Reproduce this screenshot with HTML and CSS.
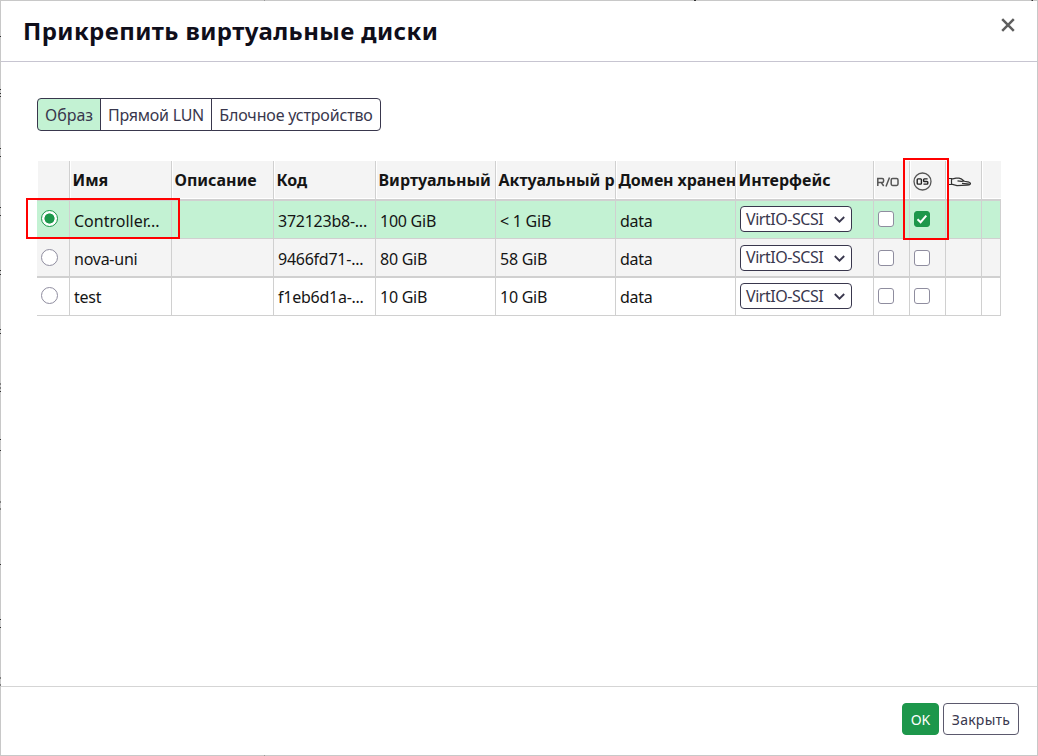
FILE: index.html
```html
<!DOCTYPE html>
<html lang="ru">
<head>
    <meta charset="UTF-8">
    <meta name="viewport" content="width=device-width, initial-scale=1.0">
    <title>Прикрепить виртуальные диски</title>
    <link rel="stylesheet" href="styles.css">
</head>
<body>

    <div class="modal">
        <!-- Header -->
        <div class="modal-header">
            <h1>Прикрепить виртуальные диски</h1>
            <button class="close-btn" aria-label="Закрыть">
                <svg width="14" height="14" viewBox="0 0 14 14"><path d="M1.2 1.2L12.8 12.8M12.8 1.2L1.2 12.8"/></svg>
            </button>
        </div>

        <!-- Body -->
        <div class="modal-body">
            <div class="tabs">
                <button class="tab active">Образ</button>
                <button class="tab">Прямой LUN</button>
                <button class="tab">Блочное устройство</button>
            </div>

            <div class="disks">
                <table class="disk-table">
                    <colgroup>
                        <col class="col-radio">
                        <col class="col-text"><col class="col-text"><col class="col-text">
                        <col class="col-size"><col class="col-size"><col class="col-size">
                        <col class="col-interface">
                        <col class="col-icon"><col class="col-icon"><col class="col-icon">
                        <col class="col-last">
                    </colgroup>
                    <thead>
                        <tr>
                            <th></th>
                            <th>Имя</th>
                            <th>Описание</th>
                            <th>Код</th>
                            <th>Виртуальный</th>
                            <th>Актуальный р</th>
                            <th class="domain">Домен хранен</th>
                            <th>Интерфейс</th>
                            <th class="icon-cell">
                                <svg class="icon-ro" width="22" height="10" viewBox="0 0 22 10"><path d="M.8 9V1.5H5.2Q6.6 1.5 6.6 3V4Q6.6 5.5 5.2 5.5H.8M4.3 5.5L6.7 9M9 9.5L12.5 .5M15.6 1.5H19.6Q21 1.5 21 3V7Q21 8.4 19.6 8.4H15.6Q14.2 8.4 14.2 7V3Q14.2 1.5 15.6 1.5Z"/></svg>
                            </th>
                            <th class="icon-cell">
                                <svg class="icon-os" width="19" height="19" viewBox="0 0 19 19"><circle cx="9.5" cy="9.5" r="8.5"/><path d="M5 6.9H7.6Q8.4 6.9 8.4 7.7V11.3Q8.4 12.1 7.6 12.1H5Q4.2 12.1 4.2 11.3V7.7Q4.2 6.9 5 6.9ZM14.6 6.9H11.4Q10.6 6.9 10.6 7.7V8.7Q10.6 9.5 11.4 9.5H14Q14.8 9.5 14.8 10.3V11.3Q14.8 12.1 14 12.1H10.5"/></svg>
                            </th>
                            <th class="icon-cell">
                                <svg class="icon-hand" width="24" height="10" viewBox="0 0 24 10"><path d="M0 1.5H3.5V7.5H0M3.5 2.2L8 1.2H11Q13 1.4 16 4L13.5 4.4L9.5 3.8M15 4L21 5.2Q23 6 22.3 7.2Q21.5 8.2 19 8.2L9 8.6L3.5 7.2M14 6.4L21.5 7"/></svg>
                            </th>
                            <th></th>
                        </tr>
                    </thead>
                    <tbody>
                        <tr class="selected">
                            <td><input type="radio" name="disk" class="radio" checked></td>
                            <td class="name">Controller...</td>
                            <td></td>
                            <td>372123b8-...</td>
                            <td>100 GiB</td>
                            <td>&lt; 1 GiB</td>
                            <td>data</td>
                            <td class="select-cell"><button class="select">VirtIO-SCSI<svg width="11" height="7" viewBox="0 0 11 7"><path d="M.8 1L5.5 5.7L10.2 1"/></svg></button></td>
                            <td><input type="checkbox" class="checkbox"></td>
                            <td><span class="checkbox checked"><svg width="12" height="10" viewBox="0 0 12 10"><path d="M1.5 5.2L4.6 8.2L10.3 1.6"/></svg></span></td>
                            <td></td>
                            <td></td>
                        </tr>
                        <tr class="even">
                            <td><input type="radio" name="disk" class="radio"></td>
                            <td>nova-uni</td>
                            <td></td>
                            <td>9466fd71-...</td>
                            <td>80 GiB</td>
                            <td>58 GiB</td>
                            <td>data</td>
                            <td class="select-cell"><button class="select">VirtIO-SCSI<svg width="11" height="7" viewBox="0 0 11 7"><path d="M.8 1L5.5 5.7L10.2 1"/></svg></button></td>
                            <td><input type="checkbox" class="checkbox"></td>
                            <td><input type="checkbox" class="checkbox"></td>
                            <td></td>
                            <td></td>
                        </tr>
                        <tr class="last">
                            <td><input type="radio" name="disk" class="radio"></td>
                            <td>test</td>
                            <td></td>
                            <td>f1eb6d1a-...</td>
                            <td>10 GiB</td>
                            <td>10 GiB</td>
                            <td>data</td>
                            <td class="select-cell"><button class="select">VirtIO-SCSI<svg width="11" height="7" viewBox="0 0 11 7"><path d="M.8 1L5.5 5.7L10.2 1"/></svg></button></td>
                            <td><input type="checkbox" class="checkbox"></td>
                            <td><input type="checkbox" class="checkbox"></td>
                            <td></td>
                            <td></td>
                        </tr>
                    </tbody>
                </table>
                <!-- Highlight frames over the table -->
                <div class="frame frame-disk"></div>
                <div class="frame frame-os"></div>
            </div>
        </div>

        <!-- Footer -->
        <div class="modal-footer">
            <button class="btn btn-primary">OK</button>
            <button class="btn">Закрыть</button>
        </div>
    </div>

    <!-- Page behind the modal, seen only along its edges -->
    <svg class="page-edge" width="1038" height="756" viewBox="0 0 1038 756">
        <path d="M0 36.5H1M0 89.5H1M0 93.5H1M0 96.5H1M0 148.5H1M0 156.5H1M0 207.5H1M0 215.5H1M0 270.5H1M0 274.5H1M0 329.5H1M0 333.5H1M0 384H1M0 388H1M0 391.5H1M0 439.5H1M0 450.5H1M0 502H1M0 509H1M0 564.5H1M0 619.5H1M0 627.5H1M0 678H1M0 685H1M694 .5H696M1031.5 .5H1033"/>
        <path class="light" d="M264.5 0V1M264.5 755V756"/>
    </svg>

</body>
</html>
```
FILE: styles.css
```css
* {
    margin: 0;
    padding: 0;
    box-sizing: border-box;
    font-family: "Noto Sans", sans-serif;
}

body {
    background-color: #fff;
    color: #151515;
    font-size: 16px;
}

.modal {
    display: flex;
    flex-direction: column;
    width: 1038px;
    height: 756px;
    border: 1px solid #c8c8c8;
}

.modal-header {
    display: flex;
    justify-content: space-between;
    height: 61px;
    padding: 0 22px 0 22px;
    border-bottom: 1px solid #c7c5d1;
}

.modal-header h1 {
    font-size: 24px;
    line-height: 60px;
    letter-spacing: 0.4px;
    color: #0f0e1a;
}

.close-btn {
    height: 14px;
    margin-top: 17px;
    border: none;
    background-color: transparent;
    cursor: pointer;
}

.close-btn svg {
    display: block;
}

svg path,
svg circle {
    fill: none;
    stroke: #333;
}

.close-btn path {
    stroke: #5e5e5e;
    stroke-width: 2.5;
}

.modal-body {
    flex: 1;
    padding: 36px 36px 0;
}

.tabs {
    display: flex;
    width: 344px;
    height: 33px;
    margin-bottom: 30px;
}

.tab {
    padding: 0 7px;
    border: 1px solid #39374d;
    margin-left: -1px;
    background-color: #fff;
    color: #39374d;
    font-size: 16px;
    letter-spacing: -0.16px;
    white-space: nowrap;
    cursor: pointer;
}

.tab:first-child {
    width: 64px;
    margin-left: 0;
    border-radius: 4px 0 0 4px;
    letter-spacing: 0;
}

.tab:nth-child(2) {
    width: 112px;
    letter-spacing: -0.25px;
}

.tab:last-child {
    width: 170px;
    border-radius: 0 4px 4px 0;
}

.tab.active {
    background-color: #c3f2d3;
}

.disks {
    position: relative;
}

.disk-table {
    width: 964px;
    table-layout: fixed;
    border-collapse: separate;
    border-spacing: 0;
}

.col-radio {
    width: 33px;
}

.col-text {
    width: 102px;
}

.col-size {
    width: 120px;
}

.col-interface {
    width: 138px;
}

.col-icon {
    width: 36px;
}

.col-last {
    width: 19px;
}

.disk-table th {
    height: 40px;
    padding: 0 0 1px 2.5px;
    border-right: 1px solid #d0d0d0;
    border-bottom: 2px solid #d0d0d0;
    background-color: #f4f4f4;
    box-shadow: inset 1px -1px #fff;
    text-align: left;
    white-space: nowrap;
    overflow: hidden;
}

.disk-table .domain {
    letter-spacing: -0.12px;
}

.disk-table th:last-child {
    border-right: none;
}

.disk-table td {
    height: 38px;
    padding: 2px 0 0 4px;
    border-right: 1px solid #d0d0d0;
    border-bottom: 1px solid #d0d0d0;
    letter-spacing: -0.25px;
    white-space: nowrap;
}

.disk-table .name {
    letter-spacing: 0;
}

.selected td {
    background-color: #c3f2d3;
}

.even td {
    height: 39px;
    border-bottom-width: 2px;
    background-color: #f4f4f4;
}

.disk-table .last td {
    padding-top: 0;
}

.disk-table .select-cell {
    padding-top: 0;
}

.disk-table .selected .select-cell,
.disk-table .last .select-cell {
    padding-bottom: 1px;
}

.disk-table .icon-cell {
    padding-top: 5px;
}

.icon-cell svg {
    display: block;
}

.icon-ro path {
    stroke: #555;
    stroke-width: 1.5;
}

.icon-os circle {
    stroke: #555;
    stroke-width: 1.3;
}

.icon-os path {
    stroke: #222;
    stroke-width: 1.4;
}

.icon-os {
    margin-left: 0.5px;
    margin-top: -1px;
}

.icon-hand {
    margin-left: -1px;
}

.icon-hand path {
    stroke-width: 1.2;
}

.radio,
.checkbox {
    appearance: none;
    display: block;
    width: 17px;
    height: 17px;
    margin-top: -3px;
    border: 1px solid #8f8d9f;
    border-radius: 50%;
    background-color: #fff;
}

.selected .radio {
    margin-top: -5px;
}

.radio:checked {
    border-color: #1d974b;
    background: radial-gradient(circle, #1d974b 4.7px, #fff 5.4px);
}

.checkbox {
    width: 16px;
    height: 16px;
    margin-top: -2px;
    border-radius: 3px;
}

.selected .checkbox {
    margin-top: -4px;
}

.checkbox.checked {
    display: flex;
    align-items: center;
    justify-content: center;
    border-color: #1d974b;
    background-color: #1d974b;
}

.checked path {
    stroke: #fff;
    stroke-width: 2;
}

.select {
    display: flex;
    align-items: center;
    justify-content: space-between;
    width: 111.5px;
    height: 26px;
    padding: 0 6px 1px 5px;
    border: 1px solid #39374d;
    border-radius: 4px;
    background-color: #fff;
    color: #39374d;
    font-size: 16px;
    letter-spacing: -0.45px;
    cursor: pointer;
}

.select svg {
    margin-top: 2px;
}

.select path {
    stroke: #39374d;
    stroke-width: 1.8;
}

.frame {
    position: absolute;
    border: 2px solid #f00;
    pointer-events: none;
}

.frame-disk {
    left: -11px;
    top: 37px;
    width: 154px;
    height: 41px;
}

.frame-os {
    left: 866px;
    top: -3px;
    width: 46px;
    height: 82px;
}

.modal-footer {
    display: flex;
    justify-content: flex-end;
    gap: 4px;
    height: 69px;
    padding: 16px 18px 0 0;
    border-top: 1px solid #d5d5d5;
}

.btn {
    width: 76px;
    height: 32px;
    border: 1px solid #5b596d;
    border-radius: 4px;
    background-color: #fff;
    color: #39374d;
    font-size: 14px;
    letter-spacing: 0.25px;
    cursor: pointer;
}

.btn-primary {
    width: 37px;
    border-color: #1d974b;
    background-color: #1d974b;
    color: #fff;
    letter-spacing: 0;
}

.page-edge {
    position: absolute;
    left: 0;
    top: 0;
    pointer-events: none;
}

.page-edge .light {
    stroke: #999;
}
```
